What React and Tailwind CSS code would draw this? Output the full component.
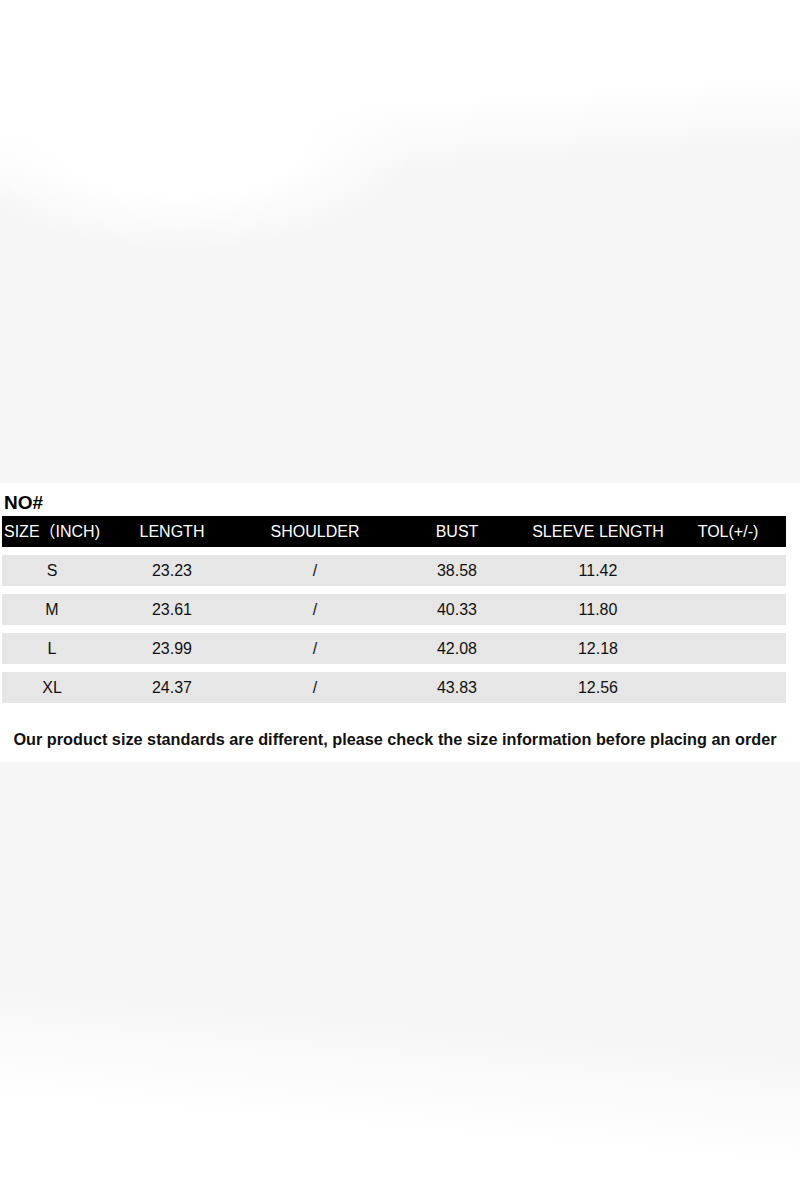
import React from "react";

const rows = [
  ["S", "23.23", "/", "38.58", "11.42", ""],
  ["M", "23.61", "/", "40.33", "11.80", ""],
  ["L", "23.99", "/", "42.08", "12.18", ""],
  ["XL", "24.37", "/", "43.83", "12.56", ""],
];

const headers = ["SIZE（INCH)", "LENGTH", "SHOULDER", "BUST", "SLEEVE LENGTH", "TOL(+/-)"];

export default function App() {
  return (
    <div
      className="w-[800px] h-[1200px] flex flex-col bg-white"
      style={{ fontFamily: '"Liberation Sans", Arial, "Noto Sans CJK SC", sans-serif' }}
    >
      <div className="h-[483px] bg-[image:radial-gradient(ellipse_240px_110px_at_180px_140px,#ffffff_50%,rgba(255,255,255,0)_100%),linear-gradient(176deg,#ffffff_24%,#f6f6f6_37%)]" />

      <div className="h-[279px] bg-white pt-[9px] flex flex-col">
        <div className="pl-[4px] text-[19px] leading-[22px] font-bold text-black">NO#</div>
        <div className="mt-[2px] ml-[2px] w-[784px] flex flex-col gap-2">
          <div className="h-[31px] bg-black grid grid-cols-[100px_140px_146px_138px_144px_116px] items-center text-white text-[16px] leading-[20px]">
            {headers.map((h, i) => (
              <div key={i} className="text-center whitespace-nowrap">
                {h}
              </div>
            ))}
          </div>
          {rows.map((r, ri) => (
            <div
              key={ri}
              className="h-[31px] bg-[#e6e6e6] grid grid-cols-[100px_140px_146px_138px_144px_116px] items-center text-[#111111] text-[16px] leading-[20px]"
            >
              {r.map((c, ci) => (
                <div key={ci} className="text-center whitespace-nowrap">
                  {c}
                </div>
              ))}
            </div>
          ))}
        </div>
        <div className="mt-[26px] text-center text-[16.25px] leading-[20px] font-bold text-[#111111] pr-[10px] whitespace-nowrap">
          Our product size standards are different, please check the size information before placing an order
        </div>
      </div>

      <div className="h-[438px] bg-[image:linear-gradient(185deg,#f6f6f6_58%,#ffffff_80%)]" />
    </div>
  );
}
